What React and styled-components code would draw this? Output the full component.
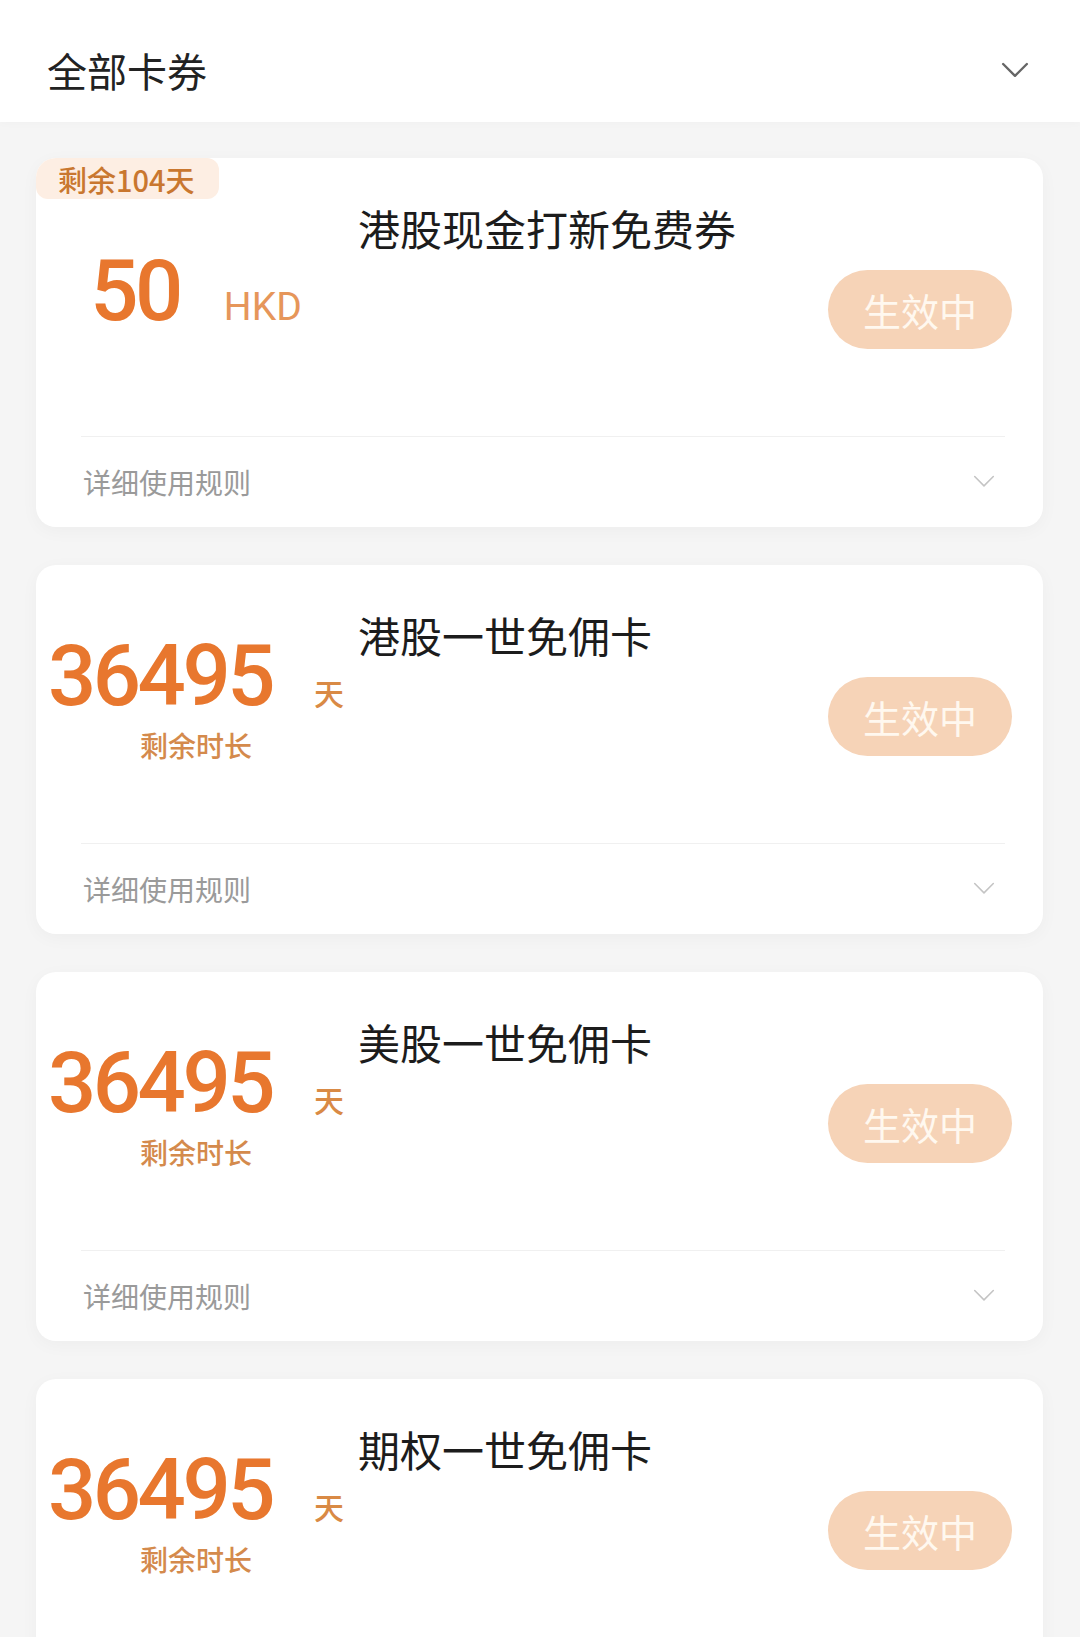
import React from 'react';
import styled, { createGlobalStyle } from 'styled-components';

const GlobalStyle = createGlobalStyle`
  body {
    margin: 0;
    background: #f5f5f5;
    font-family: "Noto Sans CJK SC", "Noto Sans", sans-serif;
  }
`;

const cards = [
  { id: 1, badge: '剩余104天', value: '50', unit: 'HKD', title: '港股现金打新免费券' },
  { id: 2, value: '36495', unit: '天', label: '剩余时长', title: '港股一世免佣卡' },
  { id: 3, value: '36495', unit: '天', label: '剩余时长', title: '美股一世免佣卡' },
  { id: 4, value: '36495', unit: '天', label: '剩余时长', title: '期权一世免佣卡' },
];

const Chevron = ({ size, color, width }) => (
  <svg width={size} height={size * 0.6} viewBox="0 0 28 17" fill="none">
    <path d="M2 2 L14 14 L26 2" stroke={color} strokeWidth={width} strokeLinecap="round" strokeLinejoin="round" />
  </svg>
);

const App = () => {
  return (<Page>
    <GlobalStyle />
    <Header>
      <HeaderTitle>全部卡券</HeaderTitle>
      <Chevron size={28} color="#666" width={2.4} />
    </Header>
    <List>
      {cards.map((card) => (
        <Card key={card.id}>
          {card.badge && <Badge>{card.badge}</Badge>}
          <CardTop>
            <ValueCol>
              <ValueRow>
                <Amount>{card.value}</Amount>
                <Unit latin={card.unit === 'HKD'}>{card.unit}</Unit>
              </ValueRow>
              {card.label && <ValueLabel>{card.label}</ValueLabel>}
            </ValueCol>
            <InfoCol>
              <CardTitle>{card.title}</CardTitle>
              <StatusButton>生效中</StatusButton>
            </InfoCol>
          </CardTop>
          <Divider />
          <CardFooter>
            <RulesText>详细使用规则</RulesText>
            <Chevron size={22} color="#c4c4c4" width={2} />
          </CardFooter>
        </Card>
      ))}
    </List>
  </Page>
  );
}

export default App;

const Page = styled.div`
  width: 1080px;
  min-height: 1637px;
  background: #f5f5f5;
`;

const Header = styled.div`
  display: flex;
  align-items: center;
  justify-content: space-between;
  height: 122px;
  box-sizing: border-box;
  padding: 18px 51px 0 47px;
  background: #fff;
  box-shadow: 0 2px 8px rgba(0, 0, 0, 0.02);
`;

const HeaderTitle = styled.h1`
  margin: 0;
  font-size: 40px;
  font-weight: 400;
  color: #222;
  line-height: 1;
`;

const List = styled.div`
  display: flex;
  flex-direction: column;
  gap: 38px;
  padding: 36px 37px 40px 36px;
`;

const Card = styled.div`
  position: relative;
  background: #fff;
  border-radius: 20px;
  box-shadow: 0 4px 18px rgba(0, 0, 0, 0.035);
  overflow: hidden;
`;

const Badge = styled.div`
  position: absolute;
  top: 0;
  left: 0;
  width: 183px;
  height: 41px;
  box-sizing: border-box;
  padding-left: 22px;
  display: flex;
  align-items: center;
  background: #fdeee3;
  border-radius: 14px 12px 12px 12px;
  color: #c9772f;
  font-size: 29px;
  font-weight: 500;
`;

const CardTop = styled.div`
  display: grid;
  grid-template-columns: 320px 1fr;
  height: 278px;
`;

const ValueCol = styled.div`
  display: flex;
  flex-direction: column;
  align-items: center;
  justify-content: center;
  padding-bottom: 12px;
`;

const ValueRow = styled.div`
  display: flex;
  align-items: baseline;
`;

const Amount = styled.span`
  font-family: Roboto, "Noto Sans", sans-serif;
  font-size: 85px;
  font-weight: 500;
  letter-spacing: -3.5px;
  line-height: 1;
  color: #e8772e;
`;

const Unit = styled.span`
  margin-left: ${(p) => (p.latin ? '44px' : '42px')};
  font-family: ${(p) => (p.latin ? 'Roboto, "Noto Sans", sans-serif' : '"Noto Sans CJK SC", sans-serif')};
  font-size: ${(p) => (p.latin ? '39px' : '30px')};
  font-weight: ${(p) => (p.latin ? 400 : 500)};
  color: ${(p) => (p.latin ? '#e6965a' : '#d98a45')};
`;

const ValueLabel = styled.div`
  margin-top: 8px;
  font-size: 28px;
  line-height: 36px;
  font-weight: 500;
  color: #d48a4c;
`;

const InfoCol = styled.div`
  display: flex;
  flex-direction: column;
  padding: 44px 31px 0 2px;
`;

const CardTitle = styled.div`
  font-size: 42px;
  line-height: 52px;
  font-weight: 400;
  color: #1c1c1c;
`;

const StatusButton = styled.div`
  align-self: flex-end;
  margin-top: 16px;
  width: 184px;
  height: 79px;
  border-radius: 40px;
  background: #f6d3b7;
  color: #fff8ef;
  font-size: 38px;
  display: flex;
  align-items: center;
  justify-content: center;
`;

const Divider = styled.div`
  height: 1px;
  margin: 0 38px 0 45px;
  background: #f0f0f0;
`;

const CardFooter = styled.div`
  display: flex;
  align-items: center;
  justify-content: space-between;
  height: 90px;
  padding: 0 48px 0 47px;
  box-sizing: border-box;
`;

const RulesText = styled.span`
  font-size: 28px;
  color: #9a9a9a;
`;
